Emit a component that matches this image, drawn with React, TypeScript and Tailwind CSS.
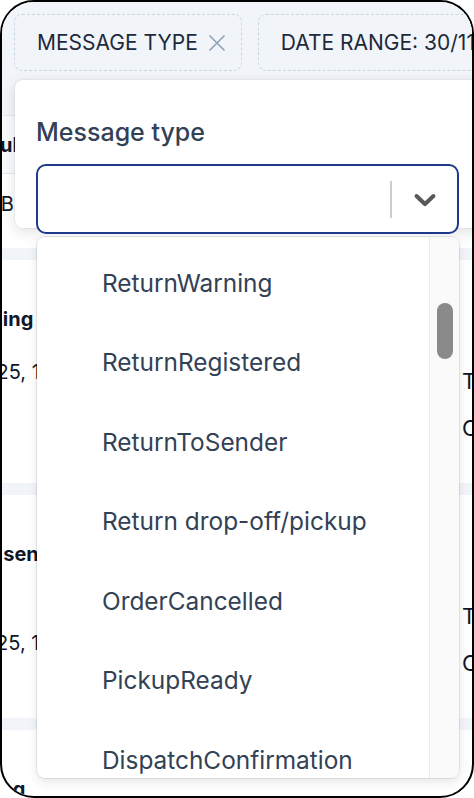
import React from 'react';

interface Message {
  title: string[];
  sent: string;
  to: string;
  status: string;
}

const messageTypes = [
  'ReturnWarning',
  'ReturnRegistered',
  'ReturnToSender',
  'Return drop-off/pickup',
  'OrderCancelled',
  'PickupReady',
  'DispatchConfirmation',
  'DeliveryAttempt',
];

const messages: Message[] = [
  { title: ['Dispatching started'], sent: '30/11/2025, 14:05', to: 'To: anna.berg@mail.com', status: 'Opened' },
  { title: ['Warning sent', 'via SMS'], sent: '29/11/2025, 10:42', to: 'To: +46 70 123 45 67', status: 'Opened' },
  { title: ['Processing'], sent: '28/11/2025, 09:18', to: 'To: lars.nilsson@mail.com', status: 'Opened' },
];

const XIcon = () => (
  <svg width="16" height="16" viewBox="0 0 16 16" fill="none" stroke="#94a3b8" strokeWidth="1.7" strokeLinecap="round">
    <path d="M1 1l14 14M15 1L1 15" />
  </svg>
);

const Chevron = () => (
  <svg width="36" height="36" viewBox="0 0 20 20" fill="#595959">
    <path d="M4.516 7.548c0.436-0.446 1.043-0.481 1.576 0l3.908 3.747 3.908-3.747c0.533-0.481 1.141-0.446 1.574 0 0.436 0.445 0.408 1.197 0 1.615-0.406 0.418-4.695 4.502-4.695 4.502-0.217 0.223-0.502 0.335-0.787 0.335s-0.57-0.112-0.789-0.335c0 0-4.287-4.084-4.695-4.502s-0.436-1.17 0-1.615z" />
  </svg>
);

const Chip: React.FC<{ label: string; removable?: boolean }> = ({ label, removable }) => (
  <div className="flex h-[57px] shrink-0 items-center gap-[11px] rounded-[8px] border border-dashed border-[#cbd5e1] bg-[#f1f5f9] pl-[22px] pr-[16px] whitespace-nowrap">
    <span className="text-[21px] uppercase text-[#1e293b]">{label}</span>
    {removable && <XIcon />}
  </div>
);

const MessageCard: React.FC<{ message: Message }> = ({ message }) => (
  <div className="flex h-[223px] shrink-0 text-[#0f172a]">
    <div className="-ml-[86px] w-[546px] shrink-0 pt-[41px] whitespace-nowrap">
      {message.title.map((line) => (
        <div key={line} className="text-[20px] font-bold leading-[36px]">
          {line}
        </div>
      ))}
      <div className="mt-[21px] text-[20px] leading-[28px]">{message.sent}</div>
    </div>
    <div className="shrink-0 pt-[107px] whitespace-nowrap text-[22px] leading-[28px]">
      <div>{message.to}</div>
      <div className="mt-[19px]">{message.status}</div>
    </div>
  </div>
);

export default function App() {
  return (
    <div className="h-[798px] w-[474px] bg-white font-['Inter','Noto_Sans',sans-serif]">
      <div className="relative flex h-full flex-col overflow-hidden rounded-[34px] border-2 border-black bg-white">
        {/* filter chips */}
        <div className="flex h-[114px] shrink-0 gap-[16px] border-b border-[#e2e8f0] bg-[#f1f5f9] pl-[12px] pt-[12px]">
          <Chip label="Message type" removable />
          <Chip label="Date range: 30/11/2025 – 30/12/2025" removable />
        </div>

        {/* table header + first row */}
        <div className="flex h-[58px] shrink-0 items-center border-b border-[#e2e8f0] bg-[#f8fafc] whitespace-nowrap">
          <span className="-ml-[15px] text-[20px] font-bold text-[#0f172a]">Subject</span>
        </div>
        <div className="h-[74px] shrink-0 pt-[16px] whitespace-nowrap">
          <span className="-ml-[15px] block text-[20px] leading-[28px] text-[#0f172a]">AB-20458</span>
        </div>

        {messages.map((m) => (
          <React.Fragment key={m.sent}>
            <div className="h-[12px] shrink-0 bg-[#f1f5f9]" />
            <MessageCard message={m} />
          </React.Fragment>
        ))}

        {/* filter popover */}
        <div className="absolute left-[13px] top-[78px] h-[148px] w-[480px] rounded-[8px] bg-white pl-[21px] pt-[36px] shadow-[0_4px_14px_rgba(15,23,42,0.12),0_0_0_1px_rgba(15,23,42,0.04)]">
          <div className="text-[25px] font-medium leading-[32px] text-[#334155]">Message type</div>
          <div className="mt-[16px] flex h-[70px] w-[423px] items-center rounded-[10px] border-2 border-[#1e3a8a] bg-white">
            <div className="flex-1" />
            <div className="h-[37px] w-[2px] bg-[#cccccc]" />
            <div className="flex w-[65px] items-center justify-center">
              <Chevron />
            </div>
          </div>
        </div>

        {/* options menu */}
        <div className="absolute left-[35px] top-[235px] flex h-[541px] w-[422px] overflow-hidden rounded-[8px] bg-white shadow-[0_0_0_1px_rgba(0,0,0,0.08),0_4px_11px_rgba(0,0,0,0.1)]">
          <div className="flex-1 pt-[6px]">
            {messageTypes.map((t) => (
              <div key={t} className="flex h-[79.5px] items-center pl-[65px] text-[24.4px] leading-[32px] text-[#334155]">
                {t}
              </div>
            ))}
          </div>
          <div className="w-[30px] shrink-0 border-l border-[#ebebeb] bg-[#fafafa] pt-[66px]">
            <div className="mx-auto h-[56px] w-[16px] rounded-full bg-[#8a8a8a]" />
          </div>
        </div>
      </div>
    </div>
  );
}
